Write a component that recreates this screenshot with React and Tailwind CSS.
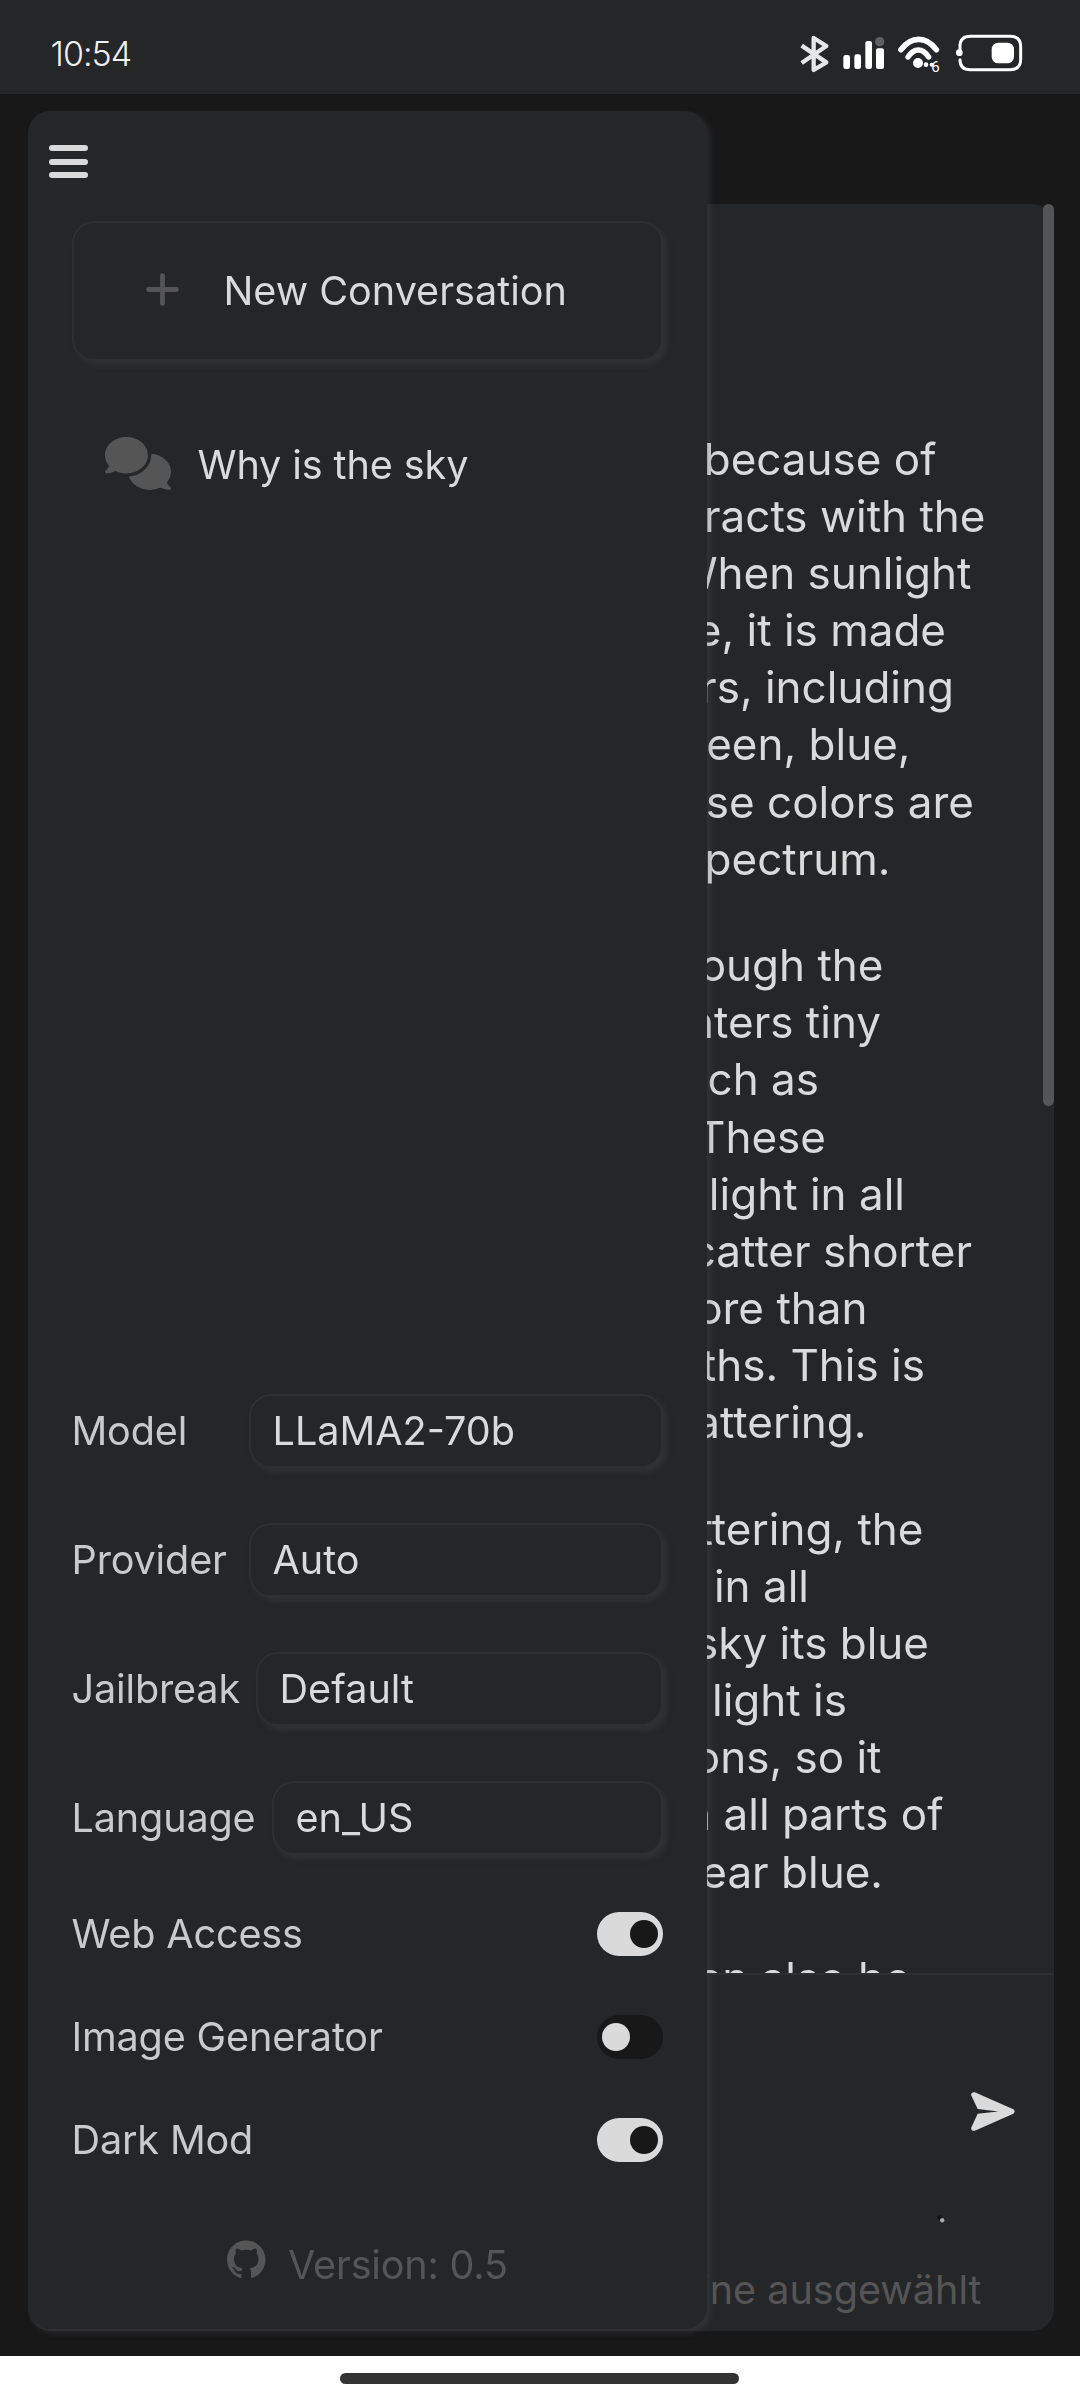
import React from "react";
import { FaComments } from "react-icons/fa6";

const paragraphs = [
  [
    ["because of", "pr-[117.5px]"],
    ["racts with the", "pr-[68.5px]"],
    ["When sunlight", "pr-[82.5px]"],
    ["e, it is made", "pr-[108px]"],
    ["rs, including", "pr-[100px]"],
    ["een, blue,", "pr-[143.5px]"],
    ["se colors are", "pr-[80px]"],
    ["pectrum.", "pr-[163.5px]"],
  ],
  [
    ["ough the", "pr-[170.5px]"],
    ["nters tiny", "pr-[173px]"],
    ["ch as", "pr-[235px]"],
    ["These", "pr-[228px]"],
    ["light in all", "pr-[149px]"],
    ["catter shorter", "pr-[82px]"],
    ["ore than", "pr-[186.5px]"],
    ["ths. This is", "pr-[129px]"],
    ["attering.", "pr-[187.5px]"],
  ],
  [
    ["ttering, the", "pr-[130.5px]"],
    ["in all", "pr-[245px]"],
    ["sky its blue", "pr-[125px]"],
    ["light is", "pr-[207px]"],
    ["ons, so it", "pr-[172.5px]"],
    ["n all parts of", "pr-[110.5px]"],
    ["ear blue.", "pr-[171px]"],
  ],
  [["an also be", "pr-[143.5px]"]],
];

const boxStyle =
  "border-2 border-[#2e2f31] rounded-[22px] bg-[#252628] shadow-[4px_4px_6px_rgba(88,88,88,0.25)]";

function StatusBar() {
  return (
    <header className="flex h-[94px] shrink-0 items-start justify-between bg-[#252628] pl-[50.5px] pr-10">
      <div className="pt-[33px] text-[34px] font-light leading-[41px] tracking-[-1px] text-[#f0f0f0]">10:54</div>
      <svg className="mt-5" width="260" height="70" viewBox="0 0 780 210" fill="none">
        <path d="M65 77 L139 127 L101 150 V54 L139 78 L65 129" stroke="#e6e6e6" strokeWidth="13" strokeLinejoin="round" />
        <g fill="#fff">
          <rect x="190" y="105" width="20" height="42" rx="7" />
          <rect x="223" y="103" width="20" height="44" rx="7" />
          <rect x="256" y="63" width="20" height="84" rx="7" />
          <rect x="288" y="85" width="24" height="62" rx="6" />
          <circle cx="414" cy="129" r="15" />
          <circle cx="438" cy="134" r="7" />
          <circle cx="455" cy="134" r="6" />
          <rect x="635" y="68" width="67" height="62" rx="20" />
          <circle cx="538" cy="98" r="10" />
        </g>
        <circle cx="299" cy="65" r="14" fill="#5f6061" />
        <path d="M363 89 Q386 58 416 58 Q446 58 469 89" stroke="#fff" strokeWidth="17" strokeLinecap="round" />
        <path d="M384 111 Q398 90 415 90 Q432 90 446 111" stroke="#fff" strokeWidth="16" strokeLinecap="round" />
        <text x="454" y="155" fontSize="45" fontFamily="Roboto, sans-serif" fill="#fff">6</text>
        <path d="M540 90 V79 Q540 49 571 49 H691 Q722 49 722 80 V118 Q722 149 691 149 H571 Q540 149 540 119" stroke="#fff" strokeWidth="9" strokeLinecap="round" />
      </svg>
    </header>
  );
}

function SelectRow({ label, value, width }) {
  return (
    <div className="flex h-[74px] items-center justify-between whitespace-nowrap">
      <span className="-ml-[0.5px] tracking-[-0.15px] text-[#cacaca]">{label}</span>
      <div className={`${boxStyle} ${width} flex h-[74px] items-center pl-[21.5px]`}>{value}</div>
    </div>
  );
}

function ToggleRow({ label, on }) {
  return (
    <div className="flex h-11 items-center justify-between">
      <span className="-ml-[0.5px] tracking-[-0.15px] text-[#cacaca]">{label}</span>
      <div className={`flex h-11 w-[66px] items-center rounded-full px-[5px] ${on ? "justify-end bg-[#dadada]" : "justify-start bg-[#181818]"}`}>
        <div className={`size-7 rounded-full ${on ? "bg-[#181818]" : "bg-[#dadada]"}`} />
      </div>
    </div>
  );
}

function Sidebar() {
  return (
    <aside className="absolute left-7 top-[17px] flex h-[2218px] w-[679px] flex-col rounded-[22px] bg-[#252628] px-11 text-[39.6px] leading-[52px] text-[#dadada] shadow-[4px_4px_6px_rgba(88,88,88,0.25)]">
      <button className="-ml-[23px] mt-[34px] flex w-[39px] flex-col gap-[7.5px]">
        <span className="h-[6px] w-full rounded-full bg-[#dadada]" />
        <span className="h-[6px] w-full rounded-full bg-[#dadada]" />
        <span className="h-[6px] w-full rounded-full bg-[#dadada]" />
      </button>
      <button className={`${boxStyle} mt-[43px] flex h-[140px] items-center pl-[72px]`}>
        <svg className="-mt-1" width="33" height="33" viewBox="0 0 33 33" stroke="#555" strokeWidth="4.8" strokeLinecap="round">
          <path d="M16.5 2.6V30.4M2.6 16.5H30.4" />
        </svg>
        <span className="ml-[44.5px]">New Conversation</span>
      </button>
      <div className="ml-[32.5px] mt-[78px] flex h-[52px] items-center">
        <FaComments className="-mt-[4px] h-[53px] w-[66px] text-[#555]" />
        <span className="ml-[27px] tracking-[-0.1px]">Why is the sky</span>
      </div>
      <div className="mt-auto flex flex-col gap-[55px]">
        <SelectRow label="Model" value="LLaMA2-70b" width="w-[414px]" />
        <SelectRow label="Provider" value="Auto" width="w-[414px]" />
        <SelectRow label="Jailbreak" value="Default" width="w-[407px]" />
        <SelectRow label="Language" value="en_US" width="w-[391px]" />
      </div>
      <div className="mt-[57px] flex flex-col gap-[59px]">
        <ToggleRow label="Web Access" on />
        <ToggleRow label="Image Generator" />
        <ToggleRow label="Dark Mod" on />
      </div>
      <div className="mb-[38.5px] ml-[155px] mt-[76.5px] flex h-[52px] items-center text-[#555]">
        <svg className="-mt-[11px]" width="38.5" height="38.5" viewBox="0 0 24 24" fill="currentColor">
          <path d="M12 .297c-6.63 0-12 5.373-12 12 0 5.303 3.438 9.8 8.205 11.385.6.113.82-.258.82-.577 0-.285-.01-1.04-.015-2.04-3.338.724-4.042-1.61-4.042-1.61C4.422 18.07 3.633 17.7 3.633 17.7c-1.087-.744.084-.729.084-.729 1.205.084 1.838 1.236 1.838 1.236 1.07 1.835 2.809 1.305 3.495.998.108-.776.417-1.305.76-1.605-2.665-.3-5.466-1.332-5.466-5.93 0-1.31.465-2.38 1.235-3.22-.135-.303-.54-1.523.105-3.176 0 0 1.005-.322 3.3 1.23.96-.267 1.98-.399 3-.405 1.02.006 2.04.138 3 .405 2.28-1.552 3.285-1.23 3.285-1.23.645 1.653.24 2.873.12 3.176.765.84 1.23 1.91 1.23 3.22 0 4.61-2.805 5.625-5.475 5.92.42.36.81 1.096.81 2.22 0 1.606-.015 2.896-.015 3.286 0 .315.21.69.825.57C20.565 22.092 24 17.592 24 12.297c0-6.627-5.373-12-12-12" />
        </svg>
        <span className="ml-[22.5px] tracking-[-0.2px]">Version: 0.5</span>
      </div>
    </aside>
  );
}

function ChatPanel() {
  return (
    <section className="relative ml-7 mr-[26px] flex h-[2127px] flex-col overflow-hidden rounded-[22px] bg-[#252628]">
      <div className="flex h-[1769px] shrink-0 flex-col gap-[49.2px] overflow-hidden pt-[226.6px] text-right text-[44px] leading-[57.15px] text-[#dadada] will-change-transform">
        {paragraphs.map((lines, i) => (
          <div key={i} className="shrink-0">
            {lines.map(([text, pad]) => (
              <div key={text} className={`whitespace-nowrap ${pad}`}>{text}</div>
            ))}
          </div>
        ))}
      </div>
      <div className="flex grow flex-col items-end border-t-2 border-[#2e2f31]">
        <svg className="mr-[39px] mt-[117px]" width="44" height="39" viewBox="0 0 132 117" fill="#dadada">
          <path d="M2 13C-3 4 5 -2 13 1.500L127 52Q135 58 127 65L13 115.500C5 119 -3 113 2 104L20 65.500L82 58.500L20 51Z" />
        </svg>
        <svg className="mr-[109px] mt-[84px]" width="8" height="8" viewBox="0 0 8 8">
          <circle cx="2.500" cy="2.500" r="2.300" fill="#111214" />
          <circle cx="5.200" cy="5.300" r="2.200" fill="#a8a8a8" />
        </svg>
        <div className="mr-[72.5px] mt-[40.500px] text-[39.6px] leading-[52px] text-[#555]">ine ausgewählt</div>
      </div>
    </section>
  );
}

export default function App() {
  return (
    <div className="flex h-[2400px] w-[1080px] flex-col overflow-hidden bg-[#181818] font-['Inter',sans-serif]">
      <StatusBar />
      <main className="relative h-[2262px] shrink-0 pt-[110px]">
        <ChatPanel />
        <div className="absolute right-[26px] top-[110px] h-[902px] w-[11px] rounded-full bg-[#555]" />
        <Sidebar />
      </main>
      <footer className="flex grow items-start justify-center bg-white pr-px pt-[17px]">
        <div className="h-[11px] w-[399px] rounded-full bg-[#333]" />
      </footer>
    </div>
  );
}
